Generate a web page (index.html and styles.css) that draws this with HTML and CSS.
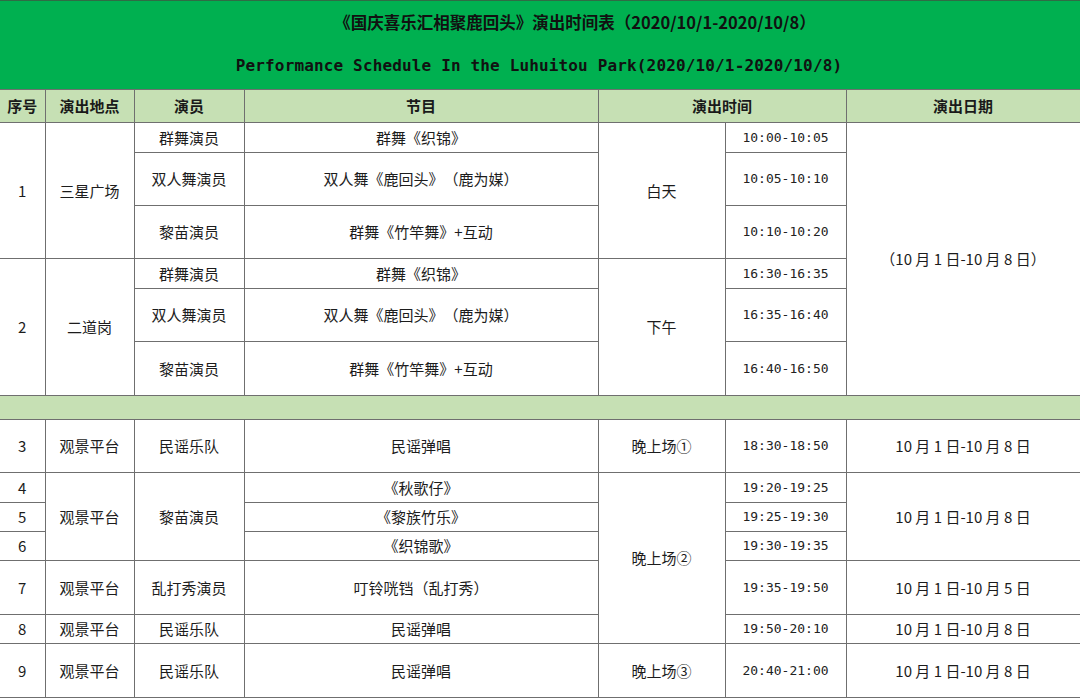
FILE: index.html
```html
<!DOCTYPE html>
<html lang="zh-CN">
<head>
<meta charset="utf-8">
<title>演出时间表</title>
<link rel="stylesheet" href="styles.css">
</head>
<body>
<div class="sheet">
  <div class="title">
    <div class="title-cn">《国庆喜乐汇相聚鹿回头》演出时间表（2020/10/1-2020/10/8）</div>
    <div class="title-en">Performance Schedule In the Luhuitou Park(2020/10/1-2020/10/8)</div>
  </div>
  <table class="grid">
    <colgroup>
      <col class="c-no"><col class="c-place"><col class="c-actor"><col class="c-show"><col class="c-slot"><col class="c-time"><col class="c-date">
    </colgroup>
    <thead>
      <tr class="h33">
        <th class="first">序号</th><th>演出地点</th><th>演员</th><th>节目</th><th colspan="2">演出时间</th><th>演出日期</th>
      </tr>
    </thead>
    <tbody>
      <tr class="h30">
        <td class="first" rowspan="3">1</td><td rowspan="3">三星广场</td><td>群舞演员</td><td>群舞《织锦》</td><td rowspan="3">白天</td><td class="mono">10:00-10:05</td>
        <td rowspan="6">（10 月 1 日-10 月 8 日）</td>
      </tr>
      <tr class="h53"><td>双人舞演员</td><td>双人舞《鹿回头》（鹿为媒）</td><td class="mono">10:05-10:10</td></tr>
      <tr class="h53"><td>黎苗演员</td><td>群舞《竹竿舞》+互动</td><td class="mono">10:10-10:20</td></tr>
      <tr class="h30">
        <td class="first" rowspan="3">2</td><td rowspan="3">二道岗</td><td>群舞演员</td><td>群舞《织锦》</td><td rowspan="3">下午</td><td class="mono">16:30-16:35</td>
      </tr>
      <tr class="h53"><td>双人舞演员</td><td>双人舞《鹿回头》（鹿为媒）</td><td class="mono">16:35-16:40</td></tr>
      <tr class="h54"><td>黎苗演员</td><td>群舞《竹竿舞》+互动</td><td class="mono">16:40-16:50</td></tr>
      <tr class="h24"><td class="first sep" colspan="7"></td></tr>
      <tr class="h53">
        <td class="first">3</td><td>观景平台</td><td>民谣乐队</td><td>民谣弹唱</td><td>晚上场①</td><td class="mono">18:30-18:50</td><td>10 月 1 日-10 月 8 日</td>
      </tr>
      <tr class="h30">
        <td class="first">4</td><td rowspan="3">观景平台</td><td rowspan="3">黎苗演员</td><td>《秋歌仔》</td><td rowspan="5">晚上场②</td><td class="mono">19:20-19:25</td><td rowspan="3">10 月 1 日-10 月 8 日</td>
      </tr>
      <tr class="h29"><td class="first">5</td><td>《黎族竹乐》</td><td class="mono">19:25-19:30</td></tr>
      <tr class="h29"><td class="first">6</td><td>《织锦歌》</td><td class="mono">19:30-19:35</td></tr>
      <tr class="h54">
        <td class="first">7</td><td>观景平台</td><td>乱打秀演员</td><td>叮铃咣铛（乱打秀）</td><td class="mono">19:35-19:50</td><td>10 月 1 日-10 月 5 日</td>
      </tr>
      <tr class="h29">
        <td class="first">8</td><td>观景平台</td><td>民谣乐队</td><td>民谣弹唱</td><td class="mono">19:50-20:10</td><td>10 月 1 日-10 月 8 日</td>
      </tr>
      <tr class="h54">
        <td class="first">9</td><td>观景平台</td><td>民谣乐队</td><td>民谣弹唱</td><td>晚上场③</td><td class="mono">20:40-21:00</td><td>10 月 1 日-10 月 8 日</td>
      </tr>
    </tbody>
  </table>
</div>
</body>
</html>
```

FILE: styles.css
```css
html, body {
  margin: 0;
  padding: 0;
  background: #ffffff;
}

.sheet {
  width: 1080px;
  font-family: "Noto Sans CJK SC", "Noto Sans", sans-serif;
  color: #1c1c1c;
  text-spacing-trim: space-all;
}

.title {
  height: 88px;
  background: #00b050;
  border-top: 1px solid #2f6b45;
  display: flex;
  flex-direction: column;
  align-items: center;
}

.title-cn {
  height: 42px;
  line-height: 42px;
  font-size: 16.5px;
  font-weight: 700;
  color: #111;
  padding-left: 70px;
}

.title-en {
  height: 46px;
  line-height: 46px;
  font-family: "DejaVu Sans Mono", "Liberation Mono", monospace;
  font-size: 16px;
  font-weight: 700;
  color: #111;
  letter-spacing: 0.15px;
  padding-right: 2px;
}

.grid {
  width: 1080px;
  border-collapse: collapse;
  table-layout: fixed;
  font-size: 15px;
}

.c-no { width: 45px; }
.c-place { width: 89px; }
.c-actor { width: 110px; }
.c-show { width: 354px; }
.c-slot { width: 127px; }
.c-time { width: 121px; }
.c-date { width: 234px; }

.grid th,
.grid td {
  border: 1px solid #6f6f6f;
  padding: 0;
  text-align: center;
  vertical-align: middle;
  line-height: 18px;
  white-space: nowrap;
}

.grid th {
  background: #c6e0b4;
  font-weight: 700;
  font-size: 15px;
  color: #1a1a1a;
}

.grid .first {
  border-left: none;
}

.h33 { height: 33px; }
.h30 { height: 30px; }
.h29 { height: 29px; }
.h53 { height: 53px; }
.h54 { height: 54px; }
.h24 { height: 24px; }

.grid td.sep {
  background: #c6e0b4;
}

.grid td.mono {
  font-family: "DejaVu Sans Mono", "Liberation Mono", monospace;
  font-size: 13px;
  color: #222;
}
```
